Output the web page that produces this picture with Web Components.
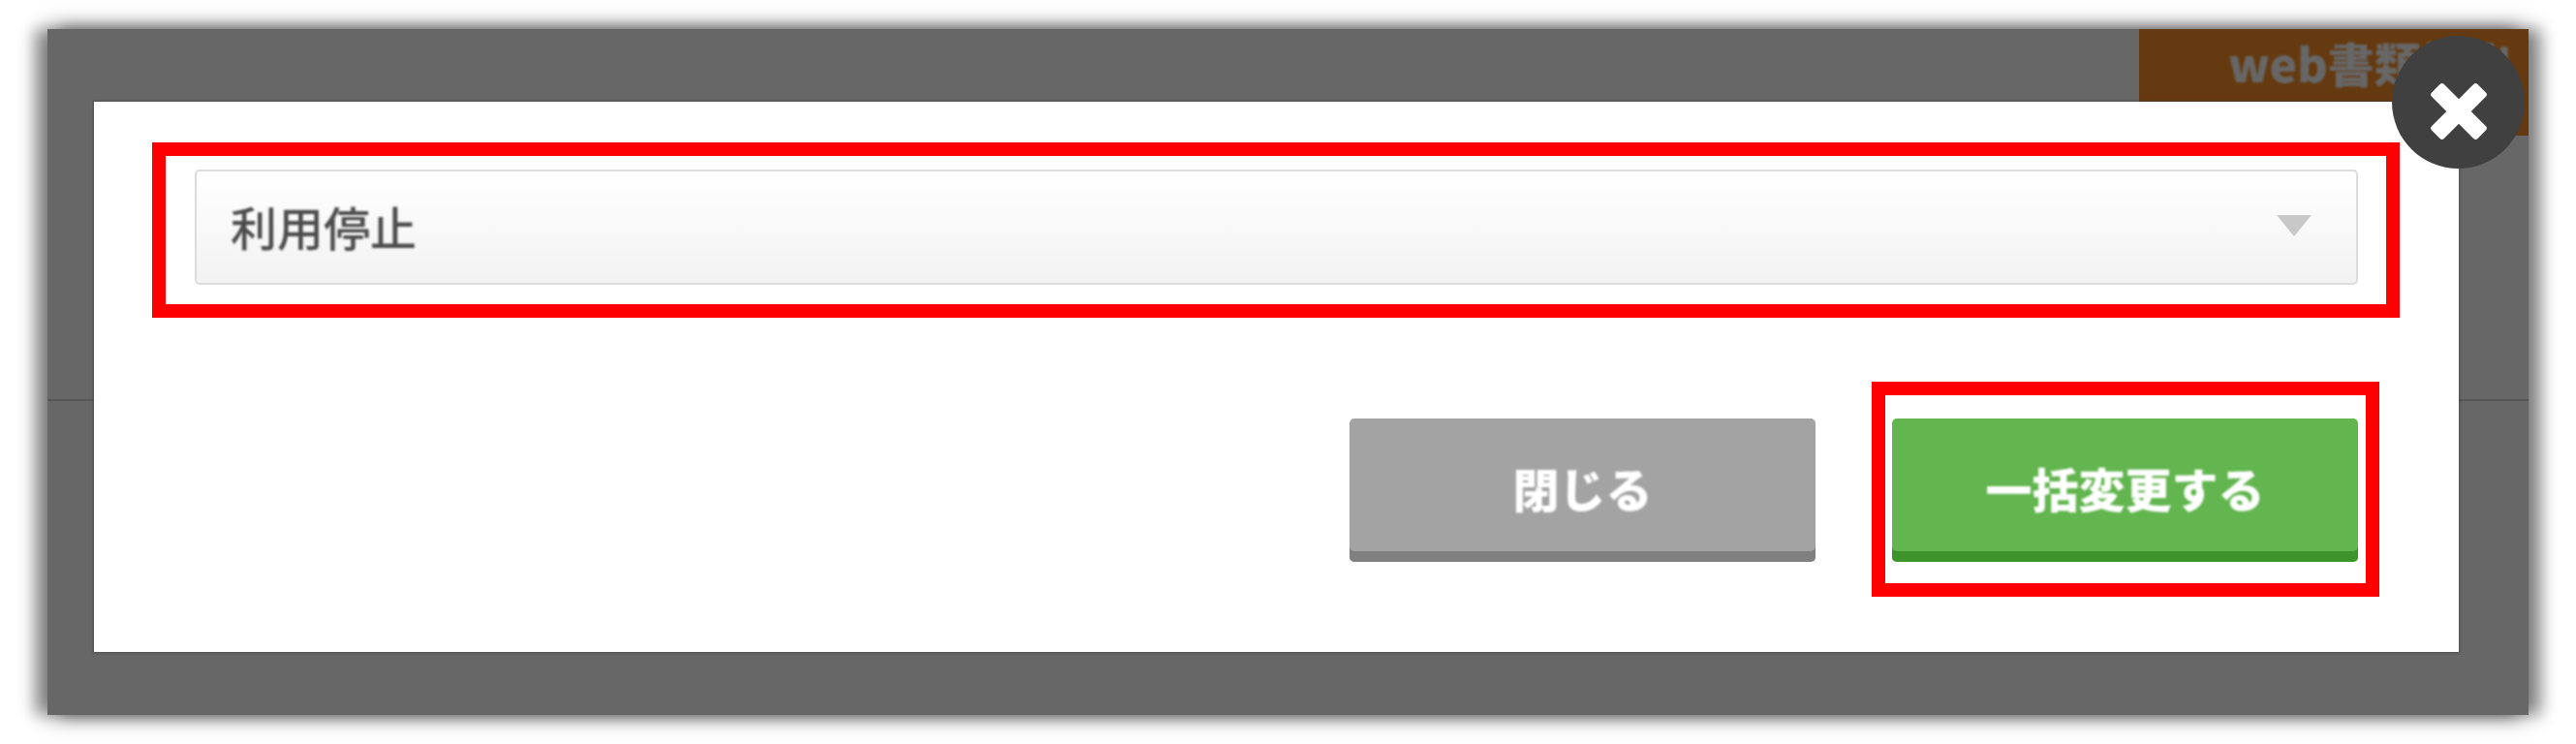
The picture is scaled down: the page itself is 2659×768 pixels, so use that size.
<!DOCTYPE html>
<html lang="ja">
<head>
<meta charset="utf-8">
<title>一括変更</title>
<style>
  html, body { margin: 0; background: #fff; }
  body { font-family: "Noto Sans CJK JP", "Noto Sans", sans-serif; }
</style>
</head>
<body>
<app-screen>
  <page-backdrop slot="page">web書類提出</page-backdrop>
  <bulk-modal slot="modal">
    <red-highlight slot="field" style="--pad: 14px 29px 20px 30px">
      <status-select>利用停止</status-select>
    </red-highlight>
    <modal-button slot="actions" style="--bg: #a3a3a3; --edge: #808080">閉じる</modal-button>
    <red-highlight slot="actions" style="--pad: 24px 8px 22px 7px">
      <modal-button style="--bg: #62b54f; --edge: #3e932a">一括変更する</modal-button>
    </red-highlight>
  </bulk-modal>
</app-screen>

<script>
// outer frame with the screenshot's soft drop shadow
class AppScreen extends HTMLElement {
  connectedCallback() {
    this.attachShadow({ mode: "open" });
    this.shadowRoot.innerHTML = `
      <style>
        :host { display: block; padding: 30px 49px; height: 768px; box-sizing: border-box; }
        .screen {
          display: grid;
          grid-template: 708px / 2561px;
          background: #676767;
          box-shadow: -13px 0 15px rgba(0,0,0,.38), 13px 0 15px rgba(0,0,0,.38),
                      0 0 26px rgba(0,0,0,.34);
        }
        .screen > slot { display: block; grid-area: 1 / 1; }
      </style>
      <div class="screen">
        <slot name="page"></slot>
        <slot name="modal"></slot>
      </div>
    `;
  }
}

// dimmed page behind the modal
class PageBackdrop extends HTMLElement {
  connectedCallback() {
    this.attachShadow({ mode: "open" });
    this.shadowRoot.innerHTML = `
      <style>
        :host { display: flex; flex-direction: column; align-items: flex-end; }
        .tab {
          width: 402px;
          height: 110px;
          box-sizing: border-box;
          padding-left: 92px;
          background: #653a10;
          color: #676767;
          font-size: 48px;
          font-weight: 900;
          line-height: 68px;
          white-space: nowrap;
          overflow: hidden;
        }
        .tab span { filter: blur(.9px); display: inline-block; }
        .rule { align-self: stretch; height: 2px; margin-top: 272px; background: #565656; }
      </style>
      <div class="tab"><span><slot></slot></span></div>
      <div class="rule"></div>
    `;
  }
}

class BulkModal extends HTMLElement {
  connectedCallback() {
    this.attachShadow({ mode: "open" });
    this.shadowRoot.innerHTML = `
      <style>
        :host { display: block; margin: 75px 72px 65px 48px; }
        .box {
          position: relative;
          box-sizing: border-box;
          height: 568px;
          padding: 42px 61px 0 60px;
          background: #fff;
          box-shadow: 0 0 2px 1px rgba(60,60,60,.55);
        }
        .actions {
          display: flex;
          justify-content: flex-end;
          align-items: flex-start;
          gap: 58px;
          margin: 66px 21px 0 0;
        }
        .actions ::slotted(modal-button) { margin-top: 38px; }
        .close {
          position: absolute;
          top: -68px;
          right: -68px;
          width: 137px;
          height: 137px;
          border-radius: 50%;
          background: #404040;
          display: flex;
          align-items: center;
          justify-content: center;
        }
        .close svg { margin-top: 18px; filter: blur(.6px); }
      </style>
      <div class="box">
        <slot name="field"></slot>
        <div class="actions"><slot name="actions"></slot></div>
        <div class="close">
          <svg width="60" height="60" viewBox="0 0 60 60" fill="#fff">
            <rect x="-3.5" y="21" width="67" height="18" rx="3" transform="rotate(45 30 30)"/>
            <rect x="-3.5" y="21" width="67" height="18" rx="3" transform="rotate(-45 30 30)"/>
          </svg>
        </div>
      </div>
    `;
  }
}

// the red annotation rectangle
class RedHighlight extends HTMLElement {
  connectedCallback() {
    this.attachShadow({ mode: "open" });
    this.shadowRoot.innerHTML = `
      <style>
        :host { display: block; box-sizing: border-box; border: 14px solid #f00; padding: var(--pad, 0); }
      </style>
      <slot></slot>
    `;
  }
}

class StatusSelect extends HTMLElement {
  connectedCallback() {
    this.attachShadow({ mode: "open" });
    this.shadowRoot.innerHTML = `
      <style>
        :host {
          display: flex;
          align-items: center;
          justify-content: space-between;
          box-sizing: border-box;
          height: 119px;
          padding: 0 46px 4px 35px;
          border: 2px solid #dcdcdc;
          border-radius: 5px;
          background: linear-gradient(#fff, #f2f2f2);
          color: #4d4d4d;
          font-size: 48px;
          font-weight: 500;
        }
        .label { filter: blur(.9px); line-height: 70px; }
        svg { display: block; filter: blur(.6px); }
      </style>
      <span class="label"><slot></slot></span>
      <svg width="36" height="22" viewBox="0 0 36 22"><path d="M0 0H36L18 22Z" fill="#c8c8c8"/></svg>
    `;
  }
}

class ModalButton extends HTMLElement {
  connectedCallback() {
    this.attachShadow({ mode: "open" });
    this.shadowRoot.innerHTML = `
      <style>
        :host {
          display: flex;
          align-items: center;
          justify-content: center;
          box-sizing: border-box;
          width: 481px;
          height: 148px;
          padding-bottom: 6px;
          border-radius: 5px;
          background: var(--bg);
          box-shadow: inset 0 -11px 0 var(--edge);
          color: #fff;
          font-size: 48px;
          font-weight: 900;
        }
        span { filter: blur(.9px); }
      </style>
      <span><slot></slot></span>
    `;
  }
}

customElements.define("app-screen", AppScreen);
customElements.define("page-backdrop", PageBackdrop);
customElements.define("bulk-modal", BulkModal);
customElements.define("red-highlight", RedHighlight);
customElements.define("status-select", StatusSelect);
customElements.define("modal-button", ModalButton);
</script>
</body>
</html>
